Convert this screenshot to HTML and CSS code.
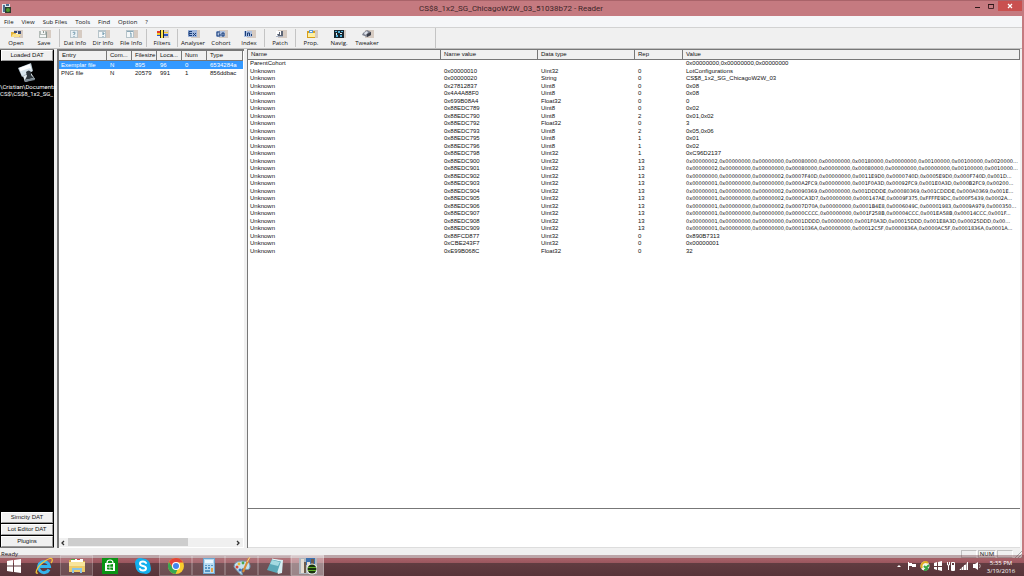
FILE: index.html
```html
<!DOCTYPE html>
<html lang="en">
<head>
<meta charset="utf-8">
<title>CS$8_1x2_SG_ChicagoW2W_03_51038b72 - Reader</title>
<link rel="stylesheet" href="styles.css">
</head>
<body>
<div class="window">
  <header class="titlebar">
    <svg class="app-icon" viewBox="0 0 9 9"><path fill="#dfe5ea" d="M0 0h8v9H0z"/><path fill="#4b6f8f" d="M1 1h2v7H1zM4 0h3v2H4z"/><path fill="#2c3a2c" d="M3 3h6v6H3z"/><circle cx="6" cy="6" r="2" fill="#4c9a2e"/></svg>
    <h1 class="title">CS$8_1x2_SG_ChicagoW2W_03_51038b72 - Reader</h1>
    <div class="window-controls">
      <button class="control" aria-label="Minimize"><svg viewBox="0 0 8 8"><path fill="#2b1718" d="M2 5h5v1H2z"/></svg></button>
      <button class="control" aria-label="Maximize"><svg viewBox="0 0 8 8"><path fill="none" stroke="#4a2528" d="M1.500 2.500h5v4h-5z"/><path fill="#2b1718" d="M1 2h6v1H1z"/></svg></button>
      <button class="control close" aria-label="Close"><svg viewBox="0 0 8 8"><path stroke="#fff" stroke-width="1.200" d="M2 2l4 4M6 2L2 6"/></svg></button>
    </div>
  </header>
  <nav class="menubar">
    <button>File</button><button>View</button><button>Sub Files</button><button>Tools</button><button>Find</button><button>Option</button><button>?</button>
  </nav>
  <div class="toolbar">
    <button><svg viewBox="0 0 13 8"><path fill="#d6cbc2" d="M4 0h9v8H4z"/><path fill="#e5b53c" d="M1 2h4l1 1h4v4H1z"/><path fill="#fbe28c" d="M3 4h8L9 7H1z"/><path fill="#3c4c76" d="M4 1h3v2H4zM8 1h3v3H8z"/><path fill="#f6f6f6" d="M6 3h2v1H6z"/></svg>Open</button>
    <button><svg viewBox="0 0 13 8"><path fill="#d6cbc2" d="M4 0h9v8H4z"/><path fill="#b4bcb8" d="M1 1h8v7H1z"/><path fill="#f4f6f5" d="M3 1h4v3H3zM2 5h6v2H2z"/><path fill="#8d9995" d="M5 1h1v2H5zM8 2h1v6H8z"/></svg>Save</button>
    <span class="separator"></span>
    <button><svg viewBox="0 0 13 8"><path fill="#d6cbc2" d="M4 0h9v8H4z"/><path fill="#b7c4ca" d="M1 0h8v8H1z"/><path fill="#e9f0f4" d="M2 1h6v6H2z"/><path fill="none" stroke="#6d97ad" d="M4 3q0-1 1-1t1 1-1 1v1M5 6v1"/></svg>Dat Info</button>
    <button><svg viewBox="0 0 13 8"><path fill="#d6cbc2" d="M4 0h9v8H4z"/><path fill="#b7c4ca" d="M1 0h8v8H1z"/><path fill="#f4f7f8" d="M2 2h6v5H2z"/><path fill="none" stroke="#6d97ad" d="M5 3h2v1H6v1M6 6v1"/></svg>Dir Info</button>
    <button><svg viewBox="0 0 13 8"><path fill="#d6cbc2" d="M4 0h9v8H4z"/><path fill="#b7c4ca" d="M1 0h8v8H1z"/><path fill="#f4f7f8" d="M2 2h6v5H2z"/><path fill="#8aa7b6" d="M2 1h6v1H2z"/><path fill="none" stroke="#6d97ad" d="M5 3h1v2M5 6h2"/></svg>File Info</button>
    <span class="separator"></span>
    <button><svg viewBox="0 0 13 8"><path fill="#d6cbc2" d="M4 0h9v8H4z"/><path fill="#e4392d" d="M1 1h5v2H1z"/><path fill="#f4c928" d="M7 2h5v1H7zM1 3h5v2H1z"/><path fill="#2957c7" d="M1 5h5v1H1zM7 4h5v2H7z"/><path fill="#232323" d="M4 0h1v8H4zM7 0h1v8H7z"/><path fill="#ffe44d" d="M5 0h2v8H5z"/></svg>Filters</button>
    <span class="separator"></span>
    <button><svg viewBox="0 0 13 8"><path fill="#d6cbc2" d="M4 0h9v8H4z"/><path fill="#9fb5dc" d="M1 0h9v7H1z"/><path fill="none" stroke="#183c78" d="M5 1.500H2v4h3M2 3.500h3M6 3l3 3M9 3L6 6"/></svg>Analyser</button>
    <button><svg viewBox="0 0 13 8"><path fill="#d6cbc2" d="M4 0h9v8H4z"/><path fill="#adc0df" d="M1 1h9v6H1z"/><path fill="none" stroke="#183c78" d="M5 2H2v4h3V4H4M7 3h2v3H7z"/></svg>Cohort</button>
    <button><svg viewBox="0 0 13 8"><path fill="#d6cbc2" d="M4 0h9v8H4z"/><path fill="#adc0df" d="M1 1h8v6H1z"/><path fill="none" stroke="#183c78" d="M2.500 1v5M4.500 6V3h2v3M8.500 4v2"/></svg>Index</button>
    <span class="separator"></span>
    <button><svg viewBox="0 0 13 8"><path fill="#d6cbc2" d="M4 0h9v8H4z"/><path fill="#fff" d="M2 1h7v6H2z"/><path fill="#5c6576" d="M3 4h2V2h1v3h1V1h2v5H4z"/><path fill="#a9b2c2" d="M2 6h7v1H2z"/></svg>Patch</button>
    <span class="separator"></span>
    <button><svg viewBox="0 0 13 8"><path fill="#d6cbc2" d="M4 0h9v8H4z"/><path fill="#d79f1c" d="M2 1h8v7H2z"/><path fill="#fff0a0" d="M3 3h7v4H3z"/><path fill="#5b9bdc" d="M4 0h4v3H4z"/><path fill="#fff" d="M5 1h2v1H5z"/></svg>Prop.</button>
    <button><svg viewBox="0 0 13 8"><path fill="#d6cbc2" d="M4 0h9v8H4z"/><path fill="#17262f" d="M1 0h10v8H1z"/><path fill="#4fb0d8" d="M2 1h2v1H2zM5 1h2v2H5zM8 1h2v1H8zM3 5h2v2H3zM7 5h2v2H7z"/><path fill="#e4f4fa" d="M3 3h1v2H3zM7 3h2v1H7z"/></svg>Navig.</button>
    <button><svg viewBox="0 0 13 8"><path fill="#d6cbc2" d="M4 0h9v8H4z"/><path fill="#7f8491" d="M2 3l4-3 4 2v3L6 7 1 5z"/><path fill="#dfe3ec" d="M3 3l3-2 1 2-3 2z"/><path fill="#3b3e48" d="M6 4l4-2v3L6 7z"/></svg>Tweaker</button>
  </div>
  <main class="workspace">
    <aside class="sidebar">
      <button>Loaded DAT</button>
      <div class="loaded">
        <svg class="thumb" viewBox="0 0 18 20"><path fill="#b9c9d4" d="M0 5l13-5 2 8-11 6z"/><path fill="#fff" d="M1 5l11-4 2 7-10 4z"/><path fill="#d7e4ec" d="M3 8l9-3 2 3-10 5z"/><path fill="#e4edf2" d="M5 13l8-3 4 6-10 3z"/><path fill="#30383e" d="M8 9q3-3 5 0v3l3 3-9 2 2-4z"/><path fill="#7d8b94" d="M6 17l10-2 1 2-10 2z"/></svg>
        <div class="path">\Cristian\Documents<br>CS$\CS$8_1x2_SG_</div>
      </div>
      <button>Simcity DAT</button>
      <button>Lot Editor DAT</button>
      <button>Plugins</button>
    </aside>
    <section class="entries">
      <table class="grid entry-grid">
        <colgroup><col class="w-entry"><col class="w-small"><col class="w-small"><col class="w-small"><col class="w-small"><col></colgroup>
        <thead><tr><th>Entry</th><th>Com...</th><th>Filesize</th><th>Loca...</th><th>Num</th><th>Type</th></tr></thead>
        <tbody>
          <tr class="selected"><td>Exemplar file</td><td>N</td><td>895</td><td>96</td><td>0</td><td>6534284a</td></tr>
          <tr><td>PNG file</td><td>N</td><td>20579</td><td>991</td><td>1</td><td>856ddbac</td></tr>
        </tbody>
      </table>
      <div class="scrollbar">
        <button aria-label="Scroll left"><svg viewBox="0 0 8 8"><path fill="none" stroke="#333" stroke-width="1.300" d="M5 2L3 4l2 2"/></svg></button>
        <div class="track"><div class="thumb-bar"></div></div>
        <button aria-label="Scroll right"><svg viewBox="0 0 8 8"><path fill="none" stroke="#333" stroke-width="1.300" d="M3 2l2 2-2 2"/></svg></button>
      </div>
    </section>
    <section class="details">
      <div class="properties">
        <table class="grid property-grid">
          <colgroup><col class="w-name"><col class="w-value"><col class="w-type"><col class="w-rep"><col></colgroup>
          <thead><tr><th>Name</th><th>Name value</th><th>Data type</th><th>Rep</th><th>Value</th></tr></thead>
          <tbody>
            <tr><td>ParentCohort</td><td></td><td></td><td></td><td>0x00000000,0x00000000,0x00000000</td></tr>
            <tr><td>Unknown</td><td>0x00000010</td><td>Uint32</td><td>0</td><td>LotConfigurations</td></tr>
            <tr><td>Unknown</td><td>0x00000020</td><td>String</td><td>0</td><td>CS$8_1x2_SG_ChicagoW2W_03</td></tr>
            <tr><td>Unknown</td><td>0x27812837</td><td>Uint8</td><td>0</td><td>0x08</td></tr>
            <tr><td>Unknown</td><td>0x4A4A88F0</td><td>Uint8</td><td>0</td><td>0x08</td></tr>
            <tr><td>Unknown</td><td>0x699B08A4</td><td>Float32</td><td>0</td><td>0</td></tr>
            <tr><td>Unknown</td><td>0x88EDC789</td><td>Uint8</td><td>0</td><td>0x02</td></tr>
            <tr><td>Unknown</td><td>0x88EDC790</td><td>Uint8</td><td>2</td><td>0x01,0x02</td></tr>
            <tr><td>Unknown</td><td>0x88EDC792</td><td>Float32</td><td>0</td><td>3</td></tr>
            <tr><td>Unknown</td><td>0x88EDC793</td><td>Uint8</td><td>2</td><td>0x05,0x06</td></tr>
            <tr><td>Unknown</td><td>0x88EDC795</td><td>Uint8</td><td>1</td><td>0x01</td></tr>
            <tr><td>Unknown</td><td>0x88EDC796</td><td>Uint8</td><td>1</td><td>0x02</td></tr>
            <tr><td>Unknown</td><td>0x88EDC798</td><td>Uint32</td><td>1</td><td>0xC96D2137</td></tr>
            <tr><td>Unknown</td><td>0x88EDC900</td><td>Uint32</td><td>13</td><td class="list">0x00000002,0x00000000,0x00000000,0x00080000,0x00000000,0x00180000,0x00000000,0x00100000,0x00100000,0x0020000...</td></tr>
            <tr><td>Unknown</td><td>0x88EDC901</td><td>Uint32</td><td>13</td><td class="list">0x00000002,0x00000000,0x00000000,0x00080000,0x00000000,0x00080000,0x00000000,0x00000000,0x00100000,0x0010000...</td></tr>
            <tr><td>Unknown</td><td>0x88EDC902</td><td>Uint32</td><td>13</td><td class="list">0x00000000,0x00000000,0x00000002,0x0007F40D,0x00000000,0x0011E9D0,0x0000740D,0x0005E9D0,0x000F740D,0x001D...</td></tr>
            <tr><td>Unknown</td><td>0x88EDC903</td><td>Uint32</td><td>13</td><td class="list">0x00000001,0x00000000,0x00000000,0x000A2FC9,0x00000000,0x001F0A3D,0x00092FC9,0x001E0A3D,0x000B2FC9,0x00200...</td></tr>
            <tr><td>Unknown</td><td>0x88EDC904</td><td>Uint32</td><td>13</td><td class="list">0x00000001,0x00000000,0x00000002,0x00090369,0x00000000,0x001DDDDE,0x00080369,0x001CDDDE,0x000A0369,0x001E...</td></tr>
            <tr><td>Unknown</td><td>0x88EDC905</td><td>Uint32</td><td>13</td><td class="list">0x00000001,0x00000000,0x00000002,0x000CA3D7,0x00000000,0x000147AE,0x0009F375,0xFFFFE9DC,0x000F5439,0x0002A...</td></tr>
            <tr><td>Unknown</td><td>0x88EDC906</td><td>Uint32</td><td>13</td><td class="list">0x00000001,0x00000000,0x00000002,0x0007D70A,0x00000000,0x0001B4E8,0x0006049C,0x00001983,0x0009A979,0x000350...</td></tr>
            <tr><td>Unknown</td><td>0x88EDC907</td><td>Uint32</td><td>13</td><td class="list">0x00000001,0x00000000,0x00000000,0x0000CCCC,0x00000000,0x001F258B,0x00004CCC,0x001EA58B,0x00014CCC,0x001F...</td></tr>
            <tr><td>Unknown</td><td>0x88EDC908</td><td>Uint32</td><td>13</td><td class="list">0x00000001,0x00000000,0x00000000,0x0001DDDD,0x00000000,0x001F0A3D,0x00015DDD,0x001E8A3D,0x00025DDD,0x00...</td></tr>
            <tr><td>Unknown</td><td>0x88EDC909</td><td>Uint32</td><td>13</td><td class="list">0x00000001,0x00000000,0x00000000,0x0001036A,0x00000000,0x00012C5F,0x0000836A,0x0000AC5F,0x0001836A,0x0001A...</td></tr>
            <tr><td>Unknown</td><td>0x88FCD877</td><td>Uint32</td><td>0</td><td>0x890B7313</td></tr>
            <tr><td>Unknown</td><td>0xCBE243F7</td><td>Uint32</td><td>0</td><td>0x00000001</td></tr>
            <tr><td>Unknown</td><td>0xE99B068C</td><td>Float32</td><td>0</td><td>32</td></tr>
          </tbody>
        </table>
      </div>
      <div class="preview"></div>
    </section>
  </main>
  <footer class="statusbar"><span class="ready">Ready</span><span class="pane"></span><span class="pane num">NUM</span><span class="pane"></span><svg class="grip" viewBox="0 0 8 8"><path stroke="#a8a8a8" d="M1 8l7-7M4 8l4-4M7 8l1-1"/></svg></footer>
</div>
<div class="taskbar">
  <button class="start" aria-label="Start"><svg viewBox="0 0 16 16"><path fill="#fff" d="M1 3l6-1v5.500H1zM8 1.900l7-1v6.600H8zM1 8.500h6V14l-6-1zM8 8.500h7V15l-7-1z"/></svg></button>
  <button class="task" aria-label="Internet Explorer"><svg viewBox="0 0 18 18"><path fill="none" stroke="#35b4ec" stroke-width="3" d="M14 12.500A5.500 5.500 0 1 1 14.500 9.500H5"/><path fill="none" stroke="#f5c53a" stroke-width="1.300" d="M3 16Q0 17 2 12.500T10 4t7-2-1 4"/></svg></button>
  <button class="task open" aria-label="File Explorer"><svg viewBox="0 0 18 18"><path fill="#d8ac45" d="M1 3h6l1 1h9v11H1z"/><path fill="#fff" d="M3 2h12v4H3z"/><path fill="#54a844" d="M3 2h4v1H3z"/><path fill="#d84a3a" d="M9 2h3v1H9z"/><path fill="#f9e49a" d="M1 5h16v10H1z"/><path fill="#eecb68" d="M1 9h16v6H1z"/><path fill="none" stroke="#8cc4e4" stroke-width="2" d="M5 16v-4h8v4"/></svg></button>
  <button class="task" aria-label="Store"><svg viewBox="0 0 18 18"><path fill="#099414" d="M1 1h16v16H1z"/><path fill="#fff" d="M4 6h10v8H4z"/><path fill="none" stroke="#fff" stroke-width="1.200" d="M6 6q0-3 3-3t3 3"/><path fill="#099414" d="M6 8l2.600-.4v2.200H6zM9.200 7.500L12 7v2.800H9.200zM6 10.400h2.600v2.300L6 12.300zM9.200 10.400H12V13l-2.800-.4z"/></svg></button>
  <button class="task" aria-label="Skype"><svg viewBox="0 0 18 18"><circle cx="6" cy="6" r="5" fill="#13b0ee"/><circle cx="12" cy="12" r="5" fill="#13b0ee"/><circle cx="9" cy="9" r="7.500" fill="#13b0ee"/><path fill="none" stroke="#fff" stroke-width="2" stroke-linecap="round" d="M12 6Q11 4.500 9 4.500 6 4.500 6 6.500T9 9t3 2.500-3 2q-2.500 0-3-1.500"/></svg></button>
  <button class="task open" aria-label="Chrome"><svg viewBox="0 0 18 18"><circle cx="9" cy="9" r="8" fill="#f8cd2e"/><path fill="#e2443a" d="M2 5a8 8 0 0 1 14.200.5H9L6 11z"/><path fill="#36a852" d="M2 5l4 6.500 4.500 1L8.500 17A8 8 0 0 1 2 5z"/><circle cx="9" cy="9" r="4" fill="#fff"/><circle cx="9" cy="9" r="3" fill="#4286ee"/></svg></button>
  <button class="task open" aria-label="Calculator"><svg viewBox="0 0 18 18"><path fill="#6ba5cf" d="M3 1h12v16H3z"/><path fill="#b9dcf1" d="M4 2h10v14H4z"/><path fill="#edf8fe" d="M5 3h8v3H5z"/><path fill="#5796c4" d="M5 8h2v1H5zM8 8h2v1H8zM11 8h2v1h-2zM5 10h2v2H5zM8 10h2v2H8zM5 13h5v2H5z"/><path fill="#e6a54a" d="M11 11h2v4h-2z"/></svg></button>
  <button class="task open" aria-label="Paint"><svg viewBox="0 0 18 18"><path fill="#c5e1f0" stroke="#719db7" d="M1 10Q1 4 9 4t8 5-5 3-3 4-8-6z"/><circle cx="4" cy="10" r="1.500" fill="#d64739"/><circle cx="6" cy="7" r="1.400" fill="#e8bc32"/><circle cx="10" cy="6" r="1.400" fill="#4aa64b"/><circle cx="7" cy="13" r="1.500" fill="#3770c2"/><path stroke="#d98d36" stroke-width="2" d="M16 1l-6 14"/><path stroke="#f2cf94" d="M17 0l-3 5"/></svg></button>
  <button class="task open" aria-label="Notepad"><svg viewBox="0 0 18 18"><path fill="#d6eef2" d="M6 2l11 1-1 13-4 1z"/><path fill="#5ba9b8" d="M6 2l9 2-4 12-10-3z"/><path fill="#a4dae1" d="M6 3l8 2-2 4-8-2z"/><path stroke="#e9f7f9" d="M6 2l9 2"/></svg></button>
  <button class="task open active" aria-label="Reader"><svg viewBox="0 0 18 18"><path fill="#aeb7bf" d="M0 1h18v16H0z"/><path fill="#3c70ae" d="M7 1h9v7H7z"/><path fill="#e5ddd2" d="M2 2h3v14H2zM8 5h3v10H8z"/><path fill="#6d5a4b" d="M5 5h2v11H5zM12 2h3v5h-3z"/><circle cx="13" cy="12" r="5.500" fill="#f1f4ed"/><circle cx="13" cy="12" r="4.500" fill="#18320e"/><path stroke="#5fae27" d="M9 10.500h8M9 13.500h8"/></svg></button>
  <div class="tray">
    <svg viewBox="0 0 12 12"><path fill="#fff" d="M4 7l2-2 2 2z"/></svg>
    <svg viewBox="0 0 12 12"><path fill="#fff" d="M2 2h1v8H2zM3 3h3v1h4v3H6V6H3z"/></svg>
    <svg viewBox="0 0 12 12"><circle cx="6" cy="6" r="4.500" fill="#f2f6e9"/><path fill="none" stroke="#e0ac24" stroke-width="2" d="M3 8a4 4 0 0 1 6-5"/><path fill="none" stroke="#34a443" stroke-width="2" d="M5 6l2 2 3-3M9 8a4 4 0 0 1-4 2"/></svg>
    <svg viewBox="0 0 12 12"><path fill="#fff" d="M2 3l3-1v4H2zM6 2l4-1v5H6zM2 7h3v3l-3-1zM6 7h4v4l-4-1z"/></svg>
    <svg viewBox="0 0 12 12"><path fill="none" stroke="#fff" d="M6.500 2.500h3v8h-3zM2.500 2v3h2V2M3.500 5v5"/><path fill="#fff" d="M7 5h2v5H7z"/></svg>
    <svg viewBox="0 0 12 12"><path fill="#fff" d="M2 9h1v1H2zM4 7h1v3H4zM6 5h2v5H6zM9 2h1v8H9z"/><path fill="#fff" opacity=".5" d="M1 10l9-8v8z"/></svg>
    <svg viewBox="0 0 12 12"><path fill="#fff" d="M2 4h2l3-2v8L4 8H2z"/><path fill="none" stroke="#fff" opacity=".6" d="M8.500 4q1.500 2 0 4"/></svg>
    <div class="clock"><span>5:35 PM</span><span>3/19/2016</span></div>
  </div>
</div>
</body>
</html>
```
FILE: styles.css
```css
* { box-sizing: border-box; }

html, body { height: 100%; }

body {
  margin: 0;
  overflow: hidden;
  background: #c57a80;
  color: #111;
  font: 6px/8px "Open Sans", "Noto Sans", sans-serif;
}

button {
  margin: 0;
  padding: 0;
  border: 0;
  background: none;
  color: inherit;
  font: inherit;
}

svg { display: block; }

.window {
  display: flex;
  flex-direction: column;
  height: 100%;
  padding: 0 2px 18px 0;
}

.titlebar {
  display: grid;
  grid-template-columns: 1fr auto 1fr;
  flex: none;
  height: 16px;
  border-top: 1px solid #a96369;
}

.app-icon { width: 9px; height: 9px; margin: 3px 0 0 2px; }

.title {
  margin: 0;
  color: #402629;
  font: 400 8px/15px Roboto, sans-serif;
}

.window-controls { display: flex; justify-content: flex-end; }

.control {
  display: flex;
  align-items: center;
  justify-content: center;
  width: 14px;
  height: 10px;
}

.control svg { width: 8px; height: 8px; }
.control.close { width: 24px; background: #c9504f; }

.menubar {
  display: flex;
  flex: none;
  gap: 8px;
  height: 12px;
  padding-left: 4px;
  border-bottom: 1px solid #d2d2d2;
  background: #f5f6f8;
}

.toolbar {
  display: flex;
  flex: none;
  width: 100%;
  height: 21px;
  padding-left: 2px;
  border-bottom: 1px solid #c0c0c0;
  background: linear-gradient(90deg, transparent 435px, #c4c4c4 435px, #c4c4c4 436px, transparent 436px) #f0f0f0;
}

.toolbar button {
  display: flex;
  flex: none;
  flex-direction: column;
  gap: 1px;
  align-items: center;
  width: 28px;
  padding-top: 2px;
  white-space: nowrap;
}

.toolbar svg { width: 13px; height: 8px; }

.separator {
  flex: none;
  width: 1px;
  margin: 1px;
  background: #c4c4c4;
}

.workspace {
  display: flex;
  flex: 1;
  gap: 3px;
  min-height: 0;
  padding-right: 2px;
  background: #f0f0f0;
  font: 6px/8px "Liberation Sans", Arial, sans-serif;
}

.sidebar {
  display: flex;
  flex: none;
  flex-direction: column;
  gap: 1px;
  width: 54px;
  border: solid #777;
  border-width: 1px 0;
  background: #000;
}

.sidebar button {
  height: 11px;
  margin: 0 1px;
  border: 1px solid;
  border-color: #fff #999 #999 #fff;
  background: #f0f0f0;
  line-height: 9px;
}

.loaded { flex: 1; color: #fff; }
.thumb { width: 18px; height: 20px; margin: 1px auto 0; }
.path { font-family: Roboto, sans-serif; line-height: 7px; white-space: nowrap; }

.entries {
  display: flex;
  flex: none;
  flex-direction: column;
  justify-content: space-between;
  width: 187px;
  padding: 0 1px 1px 0;
  border: solid #777;
  border-width: 2px 0 0 2px;
  background: #fff;
}

.grid {
  width: 100%;
  table-layout: fixed;
  border-collapse: separate;
  border-spacing: 0;
}

.grid th, .grid td {
  overflow: hidden;
  font-weight: 400;
  text-align: left;
  white-space: nowrap;
}

.grid th {
  height: 9px;
  padding: 0 0 0 3px;
  border-right: 1px solid #777;
  border-bottom: 1px solid #777;
  background: #f0f0f0;
  line-height: 9px;
}

.grid td { padding: 0 0 0 3px; line-height: 7px; }

.entry-grid td { height: 8px; line-height: 8px; }
.entry-grid td:first-child { padding-left: 2px; }
.selected { background: #3399ff; color: #fff; }

.w-entry { width: 48px; }
.w-small { width: 25px; }
.w-name { width: 193px; }
.w-value, .w-type { width: 97px; }
.w-rep { width: 48px; }

.scrollbar { display: flex; height: 9px; background: #f0f0f0; }
.scrollbar button { width: 9px; }
.scrollbar svg { width: 8px; height: 8px; }
.track { flex: 1; }
.thumb-bar { width: 72%; height: 8px; background: #cdcdcd; }

.details {
  display: flex;
  flex: 1;
  flex-direction: column;
  min-width: 0;
  border-left: 1px solid #777;
  border-top: 1px solid #777;
  background: #fff;
}

.properties { flex: 1; overflow: hidden; }
.property-grid tbody tr:nth-child(odd) { height: 7px; }
.property-grid tbody tr:nth-child(even) { height: 8px; }
.property-grid td { padding-left: 2px; }
.property-grid td + td { padding-left: 3px; }
.property-grid .list { font: 5px/7px "DejaVu Sans", Verdana, sans-serif; }

.preview {
  flex: none;
  height: 40px;
  border-top: 1px solid #777;
  border-bottom: 1px solid #ddd;
}

.statusbar {
  display: flex;
  flex: none;
  gap: 1px;
  height: 10px;
  padding-top: 2px;
  background: #f0f0f0;
  line-height: 6px;
}

.ready { flex: 1; padding: 1px; }

.pane {
  width: 16px;
  border: 1px solid #c0c0c0;
  border-right-color: #fff;
  text-align: center;
}

.pane.num { width: 18px; }
.grip { width: 8px; height: 8px; }

.taskbar {
  position: absolute;
  right: 0;
  bottom: 0;
  left: 0;
  display: flex;
  height: 21px;
  background: linear-gradient(rgba(110, 55, 62, .4) 0, rgba(110, 55, 62, .4) 4px, #a75f67 4px, #9a565e 8px, #623c41 8px, #573439 100%);
}

.start { display: flex; align-items: center; justify-content: center; width: 27px; }
.start svg { width: 16px; height: 16px; }

.task {
  display: flex;
  align-items: center;
  justify-content: center;
  width: 33px;
}

.task svg { width: 18px; height: 18px; }

.task.open {
  border: 1px solid rgba(255, 255, 255, .2);
  background: rgba(255, 255, 255, .12);
}

.task.active { background: rgba(255, 255, 255, .4); }

.tray {
  display: flex;
  gap: 1px;
  align-items: center;
  margin-left: auto;
  padding-right: 6px;
  color: #fff;
}

.tray svg { width: 12px; height: 12px; }

.clock {
  display: flex;
  flex-direction: column;
  width: 34px;
  padding-top: 2px;
  line-height: 8px;
  text-align: center;
}
```
